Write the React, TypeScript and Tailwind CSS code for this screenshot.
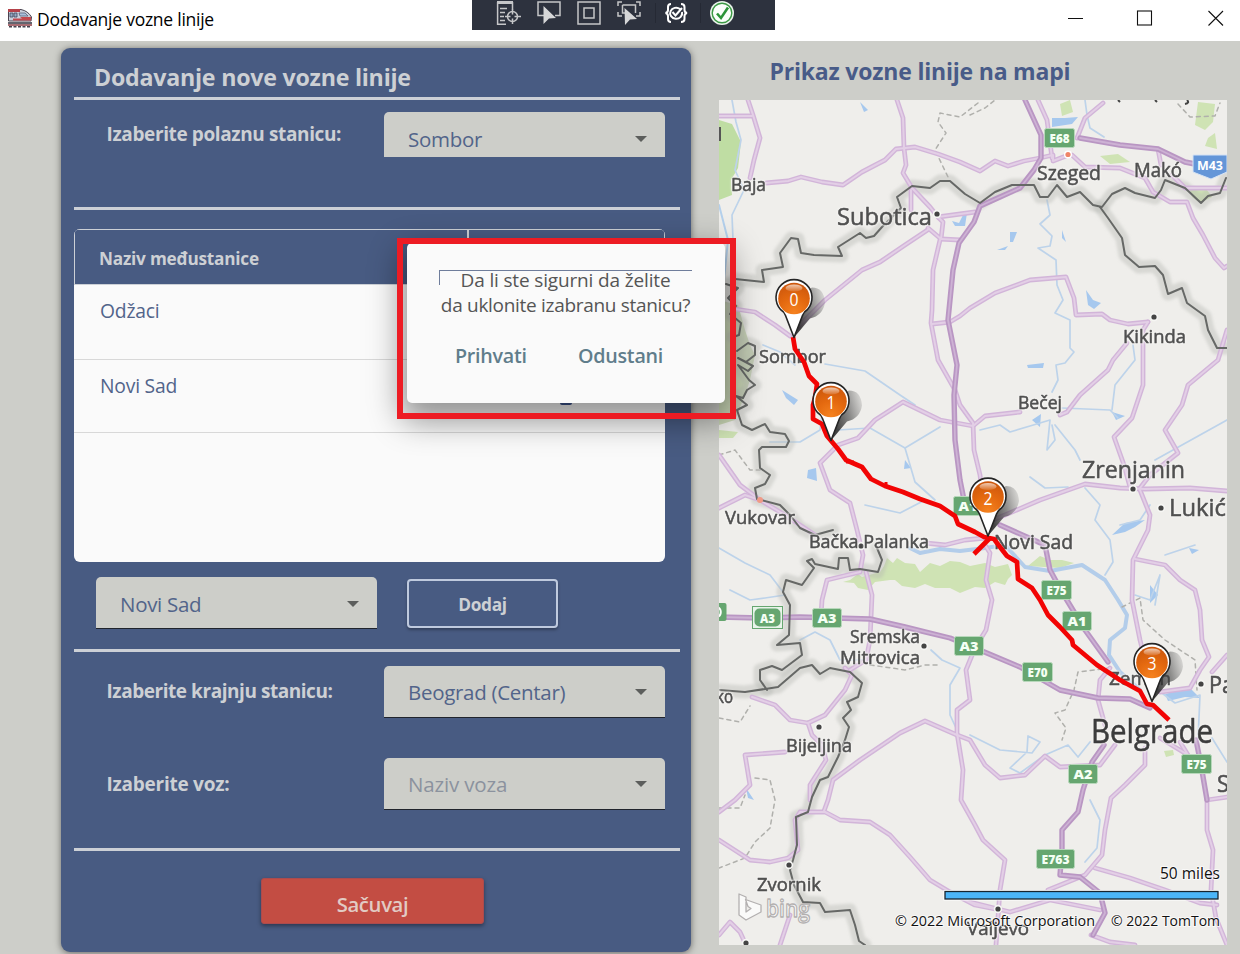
import React from "react";

const ROADS: string[] = [
  "719,116 752,116",
  "748,100 753,115 760,138 754,160 750,178",
  "766,183 788,181 801,177 822,182 843,185 862,172 885,160 896,149 915,147 938,154 960,162 980,171 995,161 1008,166 1024,161 1040,158 1053,155 1053,161 1066,156",
  "897,100 903,118 904,148 906,165 903,173 912,188 930,207 938,217",
  "911,190 911,210",
  "938,217 975,212",
  "938,217 943,222 941,239 928,228",
  "941,239 960,240",
  "940,240 933,270 932,310 931,323 938,360 955,390 960,405 973,423 974,450 980,475 982,490",
  "929,229 905,245 880,262 862,270 825,300 795,330",
  "735,309 755,312 775,325 790,336",
  "932,324 950,322 960,316 970,308 995,293 1030,280 1066,277 1074,298 1076,315 1102,314 1110,320 1128,324 1148,322",
  "1038,100 1047,120 1052,158",
  "1077,138 1085,118 1103,103",
  "1072,155 1085,167 1120,168 1145,178 1153,192 1170,202 1187,202 1193,218 1203,235 1215,258 1224,268 1227,266",
  "1158,149 1161,165",
  "1172,175 1185,188 1227,188",
  "1148,322 1143,330 1143,385 1132,418 1114,437 1124,465 1130,487",
  "1127,343 1113,360 1108,370 1080,395 1067,412 1060,415",
  "1020,412 985,416 973,426 940,420 903,402 875,420 858,438 838,445 820,463 830,490 850,503 857,530 863,555 860,572 827,580 822,600 821,615",
  "1227,330 1218,360 1188,385 1182,405 1165,430 1178,453 1150,475 1140,488",
  "990,521 1005,515 1040,500 1085,484 1120,488 1145,489 1190,488 1227,491",
  "1140,490 1150,515 1148,530 1138,550 1133,560 1132,600 1140,640 1150,680",
  "1135,559 1165,565 1180,580 1195,590 1200,610 1202,640 1209,657 1200,670 1190,688 1160,692",
  "1227,655 1212,672",
  "866,572 872,595 870,640 866,660 850,670",
  "719,455 740,485 760,500 780,512 800,525 815,535",
  "719,508 745,495 760,500",
  "925,543 945,545 965,540 985,538",
  "752,697 775,705 790,720 808,723 825,715 845,690 852,675 845,668",
  "808,723 812,735 822,745 826,760 810,785 810,800",
  "985,545 990,553 986,580 992,600 986,630 975,648 966,670 970,700 957,710 957,733 963,770 961,800 975,825 983,840 1005,860 1000,890 996,945",
  "1110,668 1100,680 1098,700 1105,725",
  "957,735 925,721 900,733 860,760 833,780 828,800 824,811",
  "957,735 970,740 985,765 1000,778 1025,775 1045,756 1060,767 1100,765 1115,745",
  "1145,748 1145,765 1125,785 1111,798 1105,830 1102,855 1085,875 1048,890",
  "1095,868 1130,878 1165,890 1200,903 1217,905",
  "1207,800 1227,797",
  "1207,800 1207,830 1213,850 1211,890 1216,918 1227,945",
  "1180,742 1188,755 1160,738",
  "785,752 745,755 750,785 735,800 719,812",
  "719,840 750,860 770,862 788,858 798,850 795,820 800,812 825,812 840,820 870,822 890,835 910,857 930,880 950,892 975,905 1000,910",
  "790,915 785,930 780,945",
  "719,935 730,922 740,932 746,945",
  "1100,910 1050,900 1010,912 970,902",
  "1091,935 1110,942 1135,945",
];

const HIGHWAYS: string[] = [
  "1025,100 1041,135 1041,158 1034,170 1020,188 1000,197 980,206 974,222 959,243 953,270 950,300 948,320 957,365 954,395 955,440 960,480 965,505",
  "1080,138 1120,145 1158,149 1185,162 1195,164",
  "719,617 760,618 800,617 870,619 905,627 950,638 975,648 1020,667 1060,690 1098,698 1130,699 1150,708",
  "1000,525 1045,545 1050,570 1062,592 1085,630 1108,662",
  "1104,745 1092,762 1083,790 1078,812 1062,830 1062,850 1060,875 1080,877 1100,893 1105,913 1093,935",
  "1196,740 1201,765 1207,800",
];

const BORDERS: string[] = [
  "735,279 764,282 762,270 783,267 780,253 791,238 798,239 801,253 814,255 842,256 838,247 860,233 866,238 874,236 882,227 901,208 897,197 912,186 930,188 940,181 950,181 965,194 980,203 995,192 1012,185 1034,185 1040,197 1048,197 1057,185 1067,197 1080,192 1093,205 1102,207 1112,194 1125,188 1135,193 1155,198 1161,190 1165,180 1185,188 1201,203 1208,196 1220,193 1226,178",
  "1100,207 1108,218 1122,238 1125,255 1139,267 1155,266 1163,275 1168,294 1182,288 1187,303 1205,316 1208,330 1217,348 1227,348",
  "726,284 738,288 728,298 736,306 730,314",
  "735,318 741,323 739,335 733,337",
  "737,351 748,343 755,346 755,355 746,362 738,358 753,366 748,371 738,365 749,380 755,385 747,390 743,398 736,396 747,405 737,410 742,425 752,430 765,424 770,432 785,434 789,441 786,447 762,447 759,450 760,468 770,475 765,484 755,488 757,499 780,505 790,515 800,528 815,535 833,530",
  "877,548 882,560 878,572 860,569 850,570 848,558 839,558 838,569 815,564 812,559 807,561 814,568 802,585 786,580 783,592 790,605 789,635 777,645 800,643 802,655 782,670 772,666 760,670 760,680 767,690",
  "719,690 745,692 778,687 800,668 812,665 820,674 830,668 850,672 862,683 858,697 847,702 851,710 843,718 849,727 845,740 838,757 828,777 820,780 812,797 808,812 796,817 797,845 793,860 790,870 794,885 803,902 820,903 825,912 850,910 855,925 859,941 865,945",
];

const RIVERS: string[] = [
  "732,100 736,122 741,140 735,170 744,190 732,215 733,240",
  "1085,100 1087,115 1090,128 1104,137",
  "1047,200 1050,215 1040,224 1052,236 1050,246 1038,248 1056,260 1057,285 1063,300 1055,313 1070,320 1070,348 1074,352 1065,363 1056,365 1058,380 1052,392",
  "825,364 865,371 900,395 915,405",
  "838,430 870,428 905,448 940,427",
  "905,448 915,482 935,500",
  "980,430 1000,425 1010,432 1030,426 1050,420 1047,450 1055,440 1052,425",
  "1062,408 1110,410 1118,418",
  "1055,425 1075,450 1080,460",
  "1133,345 1135,360 1115,385 1112,410",
  "1030,477 1045,488 1068,487",
  "1085,488 1100,505 1095,520 1110,540 1113,562 1105,575",
  "1120,525 1140,520 1150,505",
  "1165,555 1195,545",
  "1155,460 1227,420",
  "719,548 745,563 770,575 783,592",
  "730,590 750,600 765,598 785,595",
  "800,640 815,632 830,640 840,660 870,660",
  "931,650 942,660 960,668 950,685 950,715 957,730",
  "1135,595 1150,600 1160,575 1155,605",
  "1158,690 1175,703 1200,695 1198,740",
  "970,735 1000,750 1032,753 1040,742 1028,736 1027,752 1010,768 1020,773 1045,755 1068,745 1078,757 1090,742",
  "1090,800 1100,820 1097,848 1085,862",
  "1212,738 1227,762",
  "770,442 800,442 820,430 822,415",
  "865,505 900,513 925,500",
  "763,345 780,352 795,365",
];

const DOTTED: string[] = [
  "978,103 960,117 940,113 938,122 946,133 935,150 948,177",
  "970,115 985,108 995,100",
  "1178,104 1190,117 1215,116 1220,103",
  "719,455 735,450 750,470 760,470",
  "870,665 892,668 905,670 925,665 940,665",
  "719,718 740,722 750,706",
  "755,778 770,780 775,800 770,828 755,842 745,858 719,868",
  "719,808 740,808 745,795",
  "1122,607 1140,598 1143,620 1165,640 1195,660 1197,690",
  "1110,668 1078,672 1074,690 1065,710 1055,713 1066,728 1062,740",
];

type Label = { t: string; x: number; y: number; w: number; s: number; c?: string };
const LABELS: Label[] = [
  { t: "Baja", x: 731, y: 191, w: 35, s: 18.5 },
  { t: "Subotica", x: 837, y: 225, w: 95, s: 24 },
  { t: "Szeged", x: 1037, y: 180, w: 64, s: 19.5 },
  { t: "Makó", x: 1134, y: 177, w: 48, s: 19.5 },
  { t: "Sombor", x: 759, y: 363, w: 67, s: 18.5 },
  { t: "Kikinda", x: 1123, y: 343, w: 63, s: 18.5 },
  { t: "Bečej", x: 1018, y: 409, w: 44, s: 18.5 },
  { t: "Zrenjanin", x: 1082, y: 478, w: 103, s: 24 },
  { t: "Lukić", x: 1169, y: 516, w: 57, s: 24 },
  { t: "Vukovar", x: 725, y: 524, w: 70, s: 18.5 },
  { t: "Bačka Palanka", x: 809, y: 548, w: 120, s: 18.5 },
  { t: "Novi Sad", x: 994, y: 549, w: 79, s: 19.5 },
  { t: "Sremska", x: 850, y: 643, w: 70, s: 18.5 },
  { t: "Mitrovica", x: 840, y: 664, w: 80, s: 18.5 },
  { t: "Zemun", x: 1109, y: 685, w: 62, s: 19 },
  { t: "Belgrade", x: 1091, y: 743, w: 122, s: 32, c: "#3c3c3c" },
  { t: "Bijeljina", x: 786, y: 752, w: 66, s: 18.5 },
  { t: "Zvornik", x: 757, y: 891, w: 64, s: 18.5 },
  { t: "Valjevo", x: 967, y: 935, w: 62, s: 18.5 },
  { t: "ko", x: 716, y: 703, w: 17, s: 18 },
  { t: "Pa", x: 1209, y: 693, w: 25, s: 24 },
  { t: "S", x: 1217, y: 792, w: 12, s: 24 },
];

const DOTS = [
  [937, 214], [1154, 317], [1133, 489], [1161, 508], [924, 646], [1201, 684], [819, 727], [789, 865], [998, 909], [746, 943], [861, 546],
];

type Shield = { t: string; x: number; y: number; w: number };
const SHIELDS: Shield[] = [
  { t: "E68", x: 1045, y: 129, w: 29 },
  { t: "A3", x: 813, y: 609, w: 28 },
  { t: "A3", x: 955, y: 637, w: 28 },
  { t: "E75", x: 1042, y: 581, w: 29 },
  { t: "A1", x: 1063, y: 612, w: 28 },
  { t: "E70", x: 1023, y: 663, w: 29 },
  { t: "A1", x: 954, y: 497, w: 28 },
  { t: "A2", x: 1069, y: 765, w: 28 },
  { t: "E75", x: 1182, y: 755, w: 29 },
  { t: "E763", x: 1037, y: 850, w: 37 },
];

function RoadShield({ t, x, y, w }: Shield) {
  return (
    <g>
      <rect x={x - 0.5} y={y - 0.5} width={w + 1} height={19} rx={2} fill="#66a670" stroke="#b8d8bb" strokeWidth={1} />
      <text x={x + w / 2} y={y + 13.7} textAnchor="middle" fontSize={12.5} fontWeight={800} fill="#f4fff4" textLength={w - 9} lengthAdjust="spacingAndGlyphs">
        {t}
      </text>
    </g>
  );
}

function Pin({ x, y, n }: { x: number; y: number; n: string }) {
  return (
    <g transform={`translate(${x} ${y})`}>
      <path d="M0 39 L10 12 Q10 -8 18 -11 Q30 -11 31 4 Q29 17 16 20 Z" fill="url(#pinShadow)" />
      <path d="M0 39 L-8.500 17 Q-10 13 -13.500 11 A18 18 0 1 1 13.500 11 Q10 13 8.500 17 Z" fill="#fff" stroke="#252525" strokeWidth={1.6} strokeLinejoin="round" />
      <circle r={15.8} fill="url(#pinFill)" />
      <ellipse cx={0} cy={-10.5} rx={8.5} ry={3.6} fill="url(#pinGloss)" />
      <text x={0} y={7.5} textAnchor="middle" fontSize={18.5} fill="#fff" textLength={9} lengthAdjust="spacingAndGlyphs">
        {n}
      </text>
    </g>
  );
}

function RouteMap() {
  return (
    <svg viewBox="719 100 508 845" className="h-[845px] w-[508px] shrink-0 overflow-hidden font-['Open_Sans','Noto_Sans',sans-serif]">
      <defs>
        <radialGradient id="pinFill" cx="50%" cy="95%" r="95%">
          <stop offset="0" stopColor="#f58220" />
          <stop offset="0.5" stopColor="#e4690f" />
          <stop offset="1" stopColor="#cc560c" />
        </radialGradient>
        <linearGradient id="pinGloss" x1="0" y1="0" x2="0" y2="1">
          <stop offset="0" stopColor="#fff" stopOpacity="0.7" />
          <stop offset="1" stopColor="#fff" stopOpacity="0.1" />
        </linearGradient>
        <linearGradient id="pinShadow" x1="0.1" y1="0.6" x2="1" y2="0.2">
          <stop offset="0" stopColor="#222" stopOpacity="0.85" />
          <stop offset="0.5" stopColor="#444" stopOpacity="0.6" />
          <stop offset="1" stopColor="#555" stopOpacity="0.15" />
        </linearGradient>
        <filter id="soft" x="-10%" y="-10%" width="120%" height="120%">
          <feGaussianBlur stdDeviation="1.6" />
        </filter>
      </defs>
      <rect x={719} y={100} width={508} height={845} fill="#efeeeb" />

      <g fill="#cfe3b4">
        <path d="M719 120 L732 124 L741 142 L738 168 L731 180 L732 195 L719 200Z" fill="#bfdda3" />
        <path d="M719 300 L738 305 L745 330 L750 345 L755 355 L750 380 L745 395 L735 420 L719 425Z" fill="#c8d5b4" />
        <path d="M719 430 L738 432 L733 438 L719 438Z" />
        <path d="M843 582 L850 580 L858 574 L862 577 L880 572 L884 566 L887 558 L893 563 L897 558 L905 563 L915 564 L920 572 L930 563 L940 566 L950 561 L960 562 L970 566 L985 563 L995 567 L1008 564 L1012 575 L1008 579 L1005 585 L995 582 L985 588 L975 587 L960 593 L950 588 L935 588 L925 584 L915 588 L902 586 L895 580 L890 580 L875 582 L868 590 L858 588 L854 583Z" />
        <path d="M1028 566 L1040 556 L1050 560 L1062 560 L1074 563 L1060 568Z" />
        <path d="M1060 104 L1070 100 L1073 112 L1062 116Z" />
        <path d="M1198 102 L1215 104 L1213 122 L1205 130 L1195 125Z M1208 138 L1215 133 L1217 149 L1205 146Z" />
        <path d="M1190 190 L1207 190 L1212 197 L1200 203 L1192 197Z" />
        <path d="M1100 156 L1118 154 L1130 162 L1110 164Z" />
        <path d="M1164 751 L1173 750 L1174 755 L1166 757Z" />
      </g>
      <g fill="#a6c8ee">
        <path d="M1052 118 L1065 118 L1078 117 L1072 124 L1052 127Z" />
        <path d="M952 221 L959 223 L964 213 L967 213 L965 226 L955 226Z" />
        <path d="M1010 232 L1017 232 L1013 242 L1010 242Z M997 250 L1008 246 L1005 250Z M1062 230 L1066 242 L1062 238Z" />
        <path d="M1086 290 L1093 300 L1101 303 L1094 309 L1088 305Z" />
        <path d="M782 390 L798 400 L794 405 L786 398Z M808 470 L816 468 L817 481 L807 478Z M860 102 L868 110 L864 112Z" />
        <path d="M1032 420 L1041 414 L1040 427Z M1112 412 L1125 416 L1116 420Z" />
        <path d="M1112 535 L1125 523 L1145 520 L1135 527 L1125 532Z M1150 585 L1158 595 L1150 603Z M1189 548 L1199 550 L1192 554Z" />
        <path d="M1027 365 L1044 363 L1043 368 L1028 368Z M905 460 L911 468 L904 469Z M746 788 L754 800 L748 798Z" />
        <path d="M1165 694 L1190 688 L1200 698 L1185 697 L1168 701Z" />
      </g>

      <g fill="none" strokeLinejoin="round" strokeLinecap="round">
        {RIVERS.map((p, i) => (
          <polyline key={i} points={p} stroke="#bdd3ea" strokeWidth={1.7} />
        ))}
        <polyline points="910,548 920,553 940,549 960,551 985,548 1005,545 1025,567 1050,571 1082,565 1105,580 1118,600 1127,615 1125,628 1110,640 1109,655 1120,672 1140,690" stroke="#b3cdea" strokeWidth={4} />
        <polyline points="719,205 728,240 722,300" stroke="#b4d0ec" strokeWidth={2} />
        <g filter="url(#soft)">
          {BORDERS.map((p, i) => (
            <polyline key={i} points={p} stroke="#b4b6b2" strokeOpacity={0.4} strokeWidth={13} />
          ))}
        </g>
        {DOTTED.map((p, i) => (
          <polyline key={i} points={p} stroke="#b0b0ac" strokeWidth={1.5} strokeDasharray="4 4" />
        ))}
        {ROADS.map((p, i) => (
          <polyline key={i} points={p} stroke="#d2b5d9" strokeWidth={4.8} />
        ))}
        {ROADS.map((p, i) => (
          <polyline key={i} points={p} stroke="#e3cfe6" strokeWidth={2} />
        ))}
        {HIGHWAYS.map((p, i) => (
          <polyline key={i} points={p} stroke="#b996c3" strokeWidth={5.4} />
        ))}
        {HIGHWAYS.map((p, i) => (
          <polyline key={i} points={p} stroke="#cdb2d4" strokeWidth={1.8} />
        ))}
        {BORDERS.map((p, i) => (
          <polyline key={i} points={p} stroke="#666866" strokeWidth={2} />
        ))}
      </g>

      <circle cx={1068} cy={154.500} r={4} fill="#fff" />
      <circle cx={1068} cy={154.500} r={2.6} fill="#ef8568" />
      <circle cx={760} cy={500} r={3} fill="#f09a86" />
      {DOTS.map(([x, y], i) => (
        <g key={i}>
          <circle cx={x} cy={y} r={4.2} fill="#f6f6f4" />
          <circle cx={x} cy={y} r={2.6} fill="#444" />
        </g>
      ))}

      <g className="[filter:drop-shadow(0_0_1px_#f6f5f3)_drop-shadow(0_0_1px_#f6f5f3)]" strokeWidth={0.55} strokeLinejoin="round">
        {LABELS.map((l) => (
          <text key={l.t} x={l.x} y={l.y} fontSize={l.s} fill={l.c ?? "#505050"} stroke={l.c ?? "#505050"} textLength={l.w} lengthAdjust="spacingAndGlyphs">
            {l.t}
          </text>
        ))}
      </g>
      <path d="M1118 100 l2 2 M1155 100 l2 2 M1187 100 q3 3 -2 4" stroke="#444" strokeWidth={2} fill="none" />
      <path d="M719 127 h2 v14 h-2Z" fill="#555" />

      {SHIELDS.map((s, i) => (
        <RoadShield key={i} {...s} />
      ))}
      <rect x={752.500} y={606.500} width={30} height={22} fill="#e9f4ea" stroke="#66a670" />
      <rect x={754.500} y={608.500} width={26} height={18} rx={5} fill="#66a670" />
      <text x={767.500} y={622.500} textAnchor="middle" fontSize={12.500} fontWeight={800} fill="#f4fff4" textLength={15} lengthAdjust="spacingAndGlyphs">
        A3
      </text>
      <rect x={717} y={603} width={9.500} height={18} rx={2} fill="#66a670" />
      <path d="M718.500 607.500 a4 5 0 0 1 0 9" stroke="#fff" strokeWidth={2} fill="none" />
      <path d="M1193 155 H1227 V172 L1211 179 L1193 172Z" fill="#6496d8" stroke="#d5e3f5" strokeWidth={1} />
      <text x={1197} y={169.500} fontSize={13} fontWeight={700} fill="#fff" textLength={26} lengthAdjust="spacingAndGlyphs">
        M43
      </text>

      <g fill="none" stroke="#f20404" strokeWidth={4.700} strokeLinejoin="round">
        <polyline points="793,337 795,349 804,362 809,376 817,384 815,398 813,405 813,419 822,424 827,436 838,449 846,460 855,464 862,467 871,479 885,486 903,492 920,499 940,506 955,516 958,524 975,532 984,537 994,539 1000,547 1007,556 1017,562 1018,579 1032,588 1040,600 1048,615 1060,627 1072,640 1073,645 1097,665 1120,680 1140,691 1147,704 1153,705 1169,720" />
        <polyline points="974,554 990,538" />
        <path d="M846 462 h8 M886 482 v6" strokeWidth={3} />
      </g>

      <Pin x={794} y={298.5} n="0" />
      <Pin x={831} y={401.5} n="1" />
      <Pin x={988} y={497} n="2" />
      <Pin x={1152} y={662.5} n="3" />

      <g fill="#fff" fillOpacity={0.7} stroke="#b3b0b0" strokeWidth={1.3} strokeLinejoin="round">
        <path d="M739 894 L746 897 V912 L751 908.500 L748 906.500 L745.500 899.500 L761 905 V912 L746 920 L739 915Z" />
        <text x={766} y={917} fontSize={24} fontWeight={600} textLength={44} lengthAdjust="spacingAndGlyphs">
          bing
        </text>
      </g>

      <g fill="#111" stroke="#fff" strokeOpacity={0.7} strokeWidth={2} paintOrder="stroke">
        <text x={1160} y={879} fontSize={16} textLength={60} lengthAdjust="spacingAndGlyphs">
          50 miles
        </text>
        <text x={895} y={926} fontSize={14.500} textLength={200} lengthAdjust="spacingAndGlyphs">
          © 2022 Microsoft Corporation
        </text>
        <text x={1111} y={926} fontSize={14.500} textLength={109} lengthAdjust="spacingAndGlyphs">
          © 2022 TomTom
        </text>
      </g>
      <rect x={943.500} y={890} width={276} height={10.500} fill="#fff" />
      <rect x={945} y={891.500} width={273} height={7.500} fill="#4bb5f8" stroke="#16242e" strokeWidth={1.300} />
    </svg>
  );
}

function Train() {
  return (
    <svg viewBox="0 0 24 19" className="h-[19px] w-6 shrink-0">
      <path d="M0.500 0.500 H13 Q20 2 23.500 8 L23 12 H0.500Z" fill="#c9cfdb" stroke="#4b4350" strokeWidth={1} />
      <path d="M0 0 H12 V3 H0Z" fill="#b5424a" />
      <path d="M5 11.500 V9.500 H14 L12 8 H23 V11.500Z" fill="#c3484e" />
      <path d="M2 4 H5 V8 H2Z M6 4 H9 V8 H6Z" fill="#93a8c4" stroke="#434a5e" strokeWidth={0.800} />
      <path d="M11 4 H17 L20 7 H12Z" fill="#a9c0dc" stroke="#4f5870" strokeWidth={0.700} />
      <path d="M0 14 H24" stroke="#3b3d49" strokeWidth={1.600} />
      <path d="M0 16 H24" stroke="#8d3d45" strokeWidth={1.500} />
      <path d="M1 17.700 H23" stroke="#45424e" strokeWidth={1.600} strokeDasharray="3 1.500" />
    </svg>
  );
}

function DebugBar() {
  return (
    <div className="absolute left-[472px] top-0 h-[30px] w-[303px] bg-[#2d323e]">
      <svg viewBox="472 0 303 30" className="h-[30px] w-[303px]" fill="none">
        <g stroke="#c5c6c8" strokeWidth={1.500}>
          <path d="M497 2.500 H513" strokeWidth={3} />
          <path d="M497.600 2 V24.300 H506 M512.500 2 V10 M500 8.500 H507 M500 12.500 H505 M500 16.500 H504 M500 20.500 H505" />
          <circle cx={512.500} cy={16.500} r={5} />
          <path d="M512.500 9.500 V14.500 M512.500 18.500 V24 M505 16.500 H510.500 M514.500 16.500 H521" />
          <path d="M544 15.500 H538 V2 H560 V15.500 H555" />
          <rect x={578} y={2} width={22} height={22} />
          <rect x={584} y={8} width={10} height={10} />
          <path d="M618 6 V2 H622 M636 2 H640 V6 M640 12 V16 H636 M622 16 H618 V12 M622.500 5 H635.500 V13 M627 13 H622.500 V5" />
        </g>
        <path d="M543.500 6 L556 18 L549 18.500 L543.500 24Z M624.500 8 L637 19 L630 19.500 L625 25Z" fill="#d6d7d8" />
        <path d="M655.500 3 V23 M700.500 3 V23" stroke="#252934" />
        <g stroke="#fff" strokeWidth={2}>
          <path d="M671 4 Q668 4 668 7 V10 Q668 12.500 665.500 13 Q668 13.500 668 16 V19 Q668 22 671 22 M681 4 Q684.500 4 684.500 7 V10 Q684.500 12.500 687 13 Q684.500 13.500 684.500 16 V19 Q684.500 22 681 22" />
          <path d="M680 9 A6 5.500 0 1 0 682 12 M672.500 12 L675.500 15.500 L682 8" />
        </g>
        <circle cx={722} cy={13} r={12} fill="#e9f3ea" />
        <circle cx={722} cy={13} r={9.800} fill="#fbfffb" stroke="#3c9a45" strokeWidth={1.400} />
        <path d="M717 13.500 L721 18 L728 7.500" stroke="#2c9438" strokeWidth={2.600} />
      </svg>
    </div>
  );
}

function Select({ value, className = "", muted = false }: { value: string; className?: string; muted?: boolean }) {
  return (
    <div className={`flex w-[281px] shrink-0 items-center justify-between rounded-t-[5px] bg-[#cdcec9] pl-6 pr-[18px] text-[20.5px] ${muted ? "tracking-[-0.15px] text-[#8b929e]" : "tracking-[-0.3px] text-[#52648a]"} ${className}`}>
      <span className="pt-0.5">{value}</span>
      <svg viewBox="0 0 12 6" className="h-1.5 w-3">
        <path d="M0 0H12L6 6Z" fill="#5c5e5c" />
      </svg>
    </div>
  );
}

const Rule = () => <div className="h-[3px] w-full shrink-0 bg-[#ccd0d6]" />;

export default function App() {
  return (
    <div className="relative flex h-[954px] w-[1240px] flex-col overflow-hidden bg-[#cdcec9] font-['Open_Sans','Noto_Sans',sans-serif]">
      <header className="flex h-[41px] shrink-0 items-center justify-between bg-white pl-2 pr-4">
        <div className="flex items-center gap-[5px] pb-1">
          <Train />
          <h1 className="text-[17.5px] leading-6 tracking-[-0.25px] text-black">Dodavanje vozne linije</h1>
        </div>
        <svg viewBox="0 0 156 16" className="mb-1.5 h-4 w-[156px]" fill="none" stroke="#111" strokeWidth={1.100}>
          <path d="M0 8.500H15 M140.500 1L155 15.500M155 1L140.500 15.500" />
          <rect x={69.500} y={1} width={14} height={14} />
        </svg>
      </header>
      <DebugBar />

      <main className="flex min-h-0 flex-1">
        <section className="ml-[61px] mt-[7px] flex h-[904px] w-[630px] shrink-0 flex-col rounded-[9px] bg-[#485b82] pl-[13px] pr-[11px] text-[#cdd0d4] shadow-[0_1px_7px_rgba(0,0,0,0.5)]">
          <h2 className="flex h-[49px] shrink-0 items-center pl-[20px] pt-[9px] text-[23.2px] font-bold tracking-[-0.23px]">Dodavanje nove vozne linije</h2>
          <Rule />
          <div className="flex h-[107px] shrink-0 pr-[15px] pt-3">
            <div className="flex-1 pl-[32.5px] pt-2 text-[19px] font-bold leading-7 tracking-[-0.38px]">Izaberite polaznu stanicu:</div>
            <Select value="Sombor" className="h-[45px] pt-2" />
          </div>
          <Rule />
          <div className="mt-[19px] flex h-[333px] w-[591px] shrink-0 flex-col overflow-hidden rounded-[6px] bg-[#fafafa]">
            <div className="flex h-14 shrink-0 border border-[#ccd0d6] bg-[#485b82]">
              <div className="flex w-[394px] items-center border-r-2 border-[#ccd0d6] pl-6 pt-1 text-[17.2px] font-bold tracking-[-0.22px]">Naziv međustanice</div>
              <div className="flex-1" />
            </div>
            <div className="flex h-[75px] shrink-0 items-center border-b border-[#d8d8d8] pb-[21px] pl-[26px] text-[19.3px] tracking-[-0.2px] text-[#52648a]">Odžaci</div>
            <div className="flex h-[73px] shrink-0 items-center border-b border-[#d8d8d8] pb-5 pl-[26px] text-[19.3px] tracking-[-0.2px] text-[#52648a]">Novi Sad</div>
          </div>
          <div className="flex h-[87px] shrink-0 pl-[22px] pt-[15px]">
            <Select value="Novi Sad" className="h-[52px] border-b border-[#20242c] pt-0.5" />
            <button className="ml-[30px] mt-0.5 h-[49px] w-[151px] rounded-[4px] border-2 border-[#bfcade] pt-0.5 text-[17.3px] font-bold tracking-[-0.3px] shadow-[0_2px_3px_rgba(0,0,0,0.3)]">Dodaj</button>
          </div>
          <Rule />
          <div className="flex h-[106px] shrink-0 pr-[15px] pt-3.5">
            <div className="flex-1 pl-[32.5px] pt-[11px] text-[19px] font-bold leading-7 tracking-[-0.45px]">Izaberite krajnju stanicu:</div>
            <Select value="Beograd (Centar)" className="h-[52px] border-b border-[#20242c]" />
          </div>
          <div className="flex h-[90px] shrink-0 pr-[15px]">
            <div className="flex-1 pl-[32.5px] pt-3 text-[19px] font-bold leading-7 tracking-[-0.25px]">Izaberite voz:</div>
            <Select value="Naziv voza" muted className="h-[52px] border-b border-[#20242c]" />
          </div>
          <Rule />
          <div className="pl-[187px] pt-[27px]">
            <button className="h-[46px] w-[223px] rounded-[3px] border border-[#ab4b4e] bg-[#c34d43] pt-1.5 text-[20.3px] font-semibold tracking-[-0.35px] text-[#e2cbc4] shadow-[0_2px_4px_rgba(0,0,0,0.4)]">Sačuvaj</button>
          </div>
        </section>

        <aside className="ml-7 flex w-[508px] shrink-0 flex-col">
          <h2 className="flex h-[59px] shrink-0 items-center whitespace-nowrap pl-[50.5px] pt-px text-[23px] font-bold tracking-[-0.2px] text-[#485b88]">Prikaz vozne linije na mapi</h2>
          <RouteMap />
        </aside>
      </main>

      <div className="absolute left-[407px] top-[243px] h-[160px] w-[318px] rounded-[5px] bg-[#fafafa] shadow-[0_12px_32px_6px_rgba(0,0,0,0.42)]">
        <div className="ml-8 mt-[27px] h-[90px] w-[253px] border-t border-[#6f7d9b]">
          <p className="-mt-[3px] whitespace-nowrap text-center text-[19px] leading-[25px] tracking-[-0.3px] text-[#555]">
            <span className="tracking-[-0.15px]">Da li ste sigurni da želite</span>
            <br />
            da uklonite izabranu stanicu?
          </p>
          <div className="mt-[26px] flex text-[19.7px] font-semibold leading-6 tracking-[-0.25px] text-[#607d8b]">
            <button className="ml-4 w-[72px] whitespace-nowrap text-left">Prihvati</button>
            <button className="ml-[51px] whitespace-nowrap text-left">Odustani</button>
          </div>
        </div>
      </div>
      <div className="absolute left-[439px] top-[270px] h-[15px] w-px bg-[#6f7d9b]" />
      <div className="absolute left-[560px] top-[403px] h-[2px] w-3 rounded-b-[2px] bg-[#26355a]" />
      <div className="absolute left-[397px] top-[238px] h-[181px] w-[339px] border-[6px] border-[#ed1c24]" />
    </div>
  );
}
